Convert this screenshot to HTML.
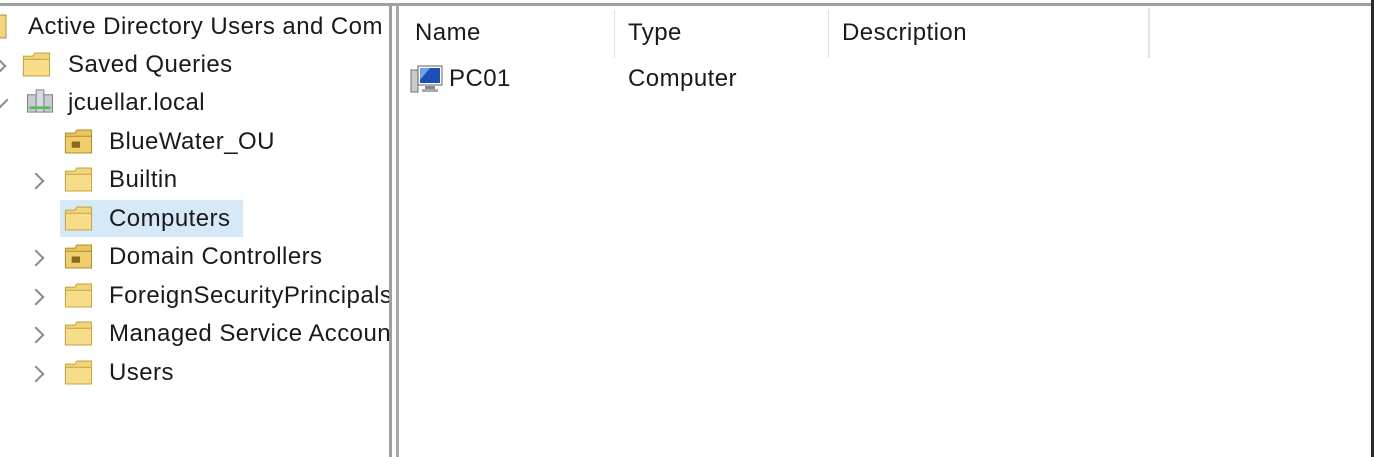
<!DOCTYPE html>
<html><head><style>
body{margin:0;width:1374px;height:457px;background:#fff;position:relative;overflow:hidden;font-family:"Liberation Sans",sans-serif;font-size:24px;letter-spacing:0.45px;color:#1a1a1a}
.a{position:absolute;white-space:nowrap}
.t{position:absolute;line-height:38px;height:38px;white-space:nowrap}
.f{position:absolute;width:30px;height:25px}
.ch{position:absolute;width:10px;height:10px;border-right:2px solid #8a8a8a;border-bottom:2px solid #8a8a8a;transform:rotate(-45deg)}
</style></head><body>
<div class="a" style="left:0;top:3px;width:1374px;height:3px;background:#a0a0a0"></div>
<div class="a" style="left:389px;top:5px;width:3px;height:452px;background:#a0a0a0"></div>
<div class="a" style="left:396px;top:5px;width:3px;height:452px;background:#a8a8a8"></div>
<div class="a" style="left:1371px;top:0;width:3px;height:457px;background:#2a2a2a"></div>
<div class="a" style="left:0;top:6px;width:389px;height:451px;overflow:hidden">
<svg width="0" height="0" style="position:absolute"><defs>
<symbol id="fd" viewBox="0 0 28 24"><path d="M1 4h9l2-3h14v22H1z" fill="#f2d57c" stroke="#c9a640"/><rect x="1" y="7" width="25" height="16" fill="#f7dd8a" stroke="#c9a640"/></symbol>
<symbol id="ou" viewBox="0 0 28 24"><path d="M1 4h9l2-3h14v22H1z" fill="#e9c65e" stroke="#b8922e"/><rect x="1" y="7" width="25" height="16" fill="#efcf6c" stroke="#b8922e"/><rect x="7" y="12" width="8" height="6" fill="#8a6a1e"/></symbol>
</defs></svg>
<div class="a" style="left:60px;top:194px;width:183px;height:37px;background:#d5e9f9"></div>
<svg class="f" style="left:-8px;top:8px" viewBox="0 0 28 24"><rect x="1" y="1" width="12" height="22" fill="#f2d57c" stroke="#b8922e"/></svg>
<div class="t" style="left:28px;top:2px">Active Directory Users and Com</div>
<div class="ch" style="left:-8px;top:54px"></div>
<svg class="f" style="left:22px;top:46px"><use href="#fd"/></svg>
<div class="t" style="left:68px;top:40px">Saved Queries</div>
<div class="ch" style="left:-6px;top:88px;transform:rotate(45deg)"></div>
<svg class="f" style="left:25px;top:83px" viewBox="0 0 28 26"><rect x="1" y="6" width="9" height="18" fill="#c8ccd2" stroke="#7a808a"/><rect x="18" y="6" width="9" height="18" fill="#c8ccd2" stroke="#7a808a"/><rect x="10" y="1" width="8" height="23" fill="#d8dce2" stroke="#7a808a"/><rect x="3" y="18" width="22" height="3" fill="#5cb85c"/></svg>
<div class="t" style="left:68px;top:78px">jcuellar.local</div>
<svg class="f" style="left:64px;top:123px"><use href="#ou"/></svg>
<div class="t" style="left:109px;top:117px">BlueWater_OU</div>
<div class="ch" style="left:30px;top:169px"></div>
<svg class="f" style="left:64px;top:161px"><use href="#fd"/></svg>
<div class="t" style="left:109px;top:155px">Builtin</div>
<svg class="f" style="left:64px;top:200px"><use href="#fd"/></svg>
<div class="t" style="left:109px;top:194px">Computers</div>
<div class="ch" style="left:30px;top:246px"></div>
<svg class="f" style="left:64px;top:238px"><use href="#ou"/></svg>
<div class="t" style="left:109px;top:232px">Domain Controllers</div>
<div class="ch" style="left:30px;top:285px"></div>
<svg class="f" style="left:64px;top:277px"><use href="#fd"/></svg>
<div class="t" style="left:109px;top:271px">ForeignSecurityPrincipals</div>
<div class="ch" style="left:30px;top:323px"></div>
<svg class="f" style="left:64px;top:315px"><use href="#fd"/></svg>
<div class="t" style="left:109px;top:309px">Managed Service Accounts</div>
<div class="ch" style="left:30px;top:362px"></div>
<svg class="f" style="left:64px;top:354px"><use href="#fd"/></svg>
<div class="t" style="left:109px;top:348px">Users</div>
</div>
<div class="a" style="left:614px;top:10px;width:1px;height:48px;background:#e2e2e2"></div>
<div class="a" style="left:828px;top:10px;width:1px;height:48px;background:#e2e2e2"></div>
<div class="a" style="left:1148px;top:8px;width:2px;height:50px;background:#e2e2e2"></div>
<div class="t" style="left:415px;top:14px">Name</div>
<div class="t" style="left:628px;top:14px">Type</div>
<div class="t" style="left:842px;top:14px">Description</div>
<svg class="a" style="left:410px;top:64px" width="34" height="30" viewBox="0 0 34 30"><rect x="1" y="6" width="7" height="22" fill="#c8ccd2" stroke="#707070"/><rect x="8" y="2" width="24" height="19" fill="#fff" stroke="#606060"/><rect x="10" y="4" width="20" height="15" fill="#1d4fb8"/><path d="M10 4l10 0-10 12z" fill="#6fa0ee"/><rect x="15" y="22" width="10" height="3" fill="#888"/><rect x="12" y="25" width="16" height="3" fill="#aaa"/></svg>
<div class="t" style="left:449px;top:60px">PC01</div>
<div class="t" style="left:628px;top:60px">Computer</div>
</body></html>
